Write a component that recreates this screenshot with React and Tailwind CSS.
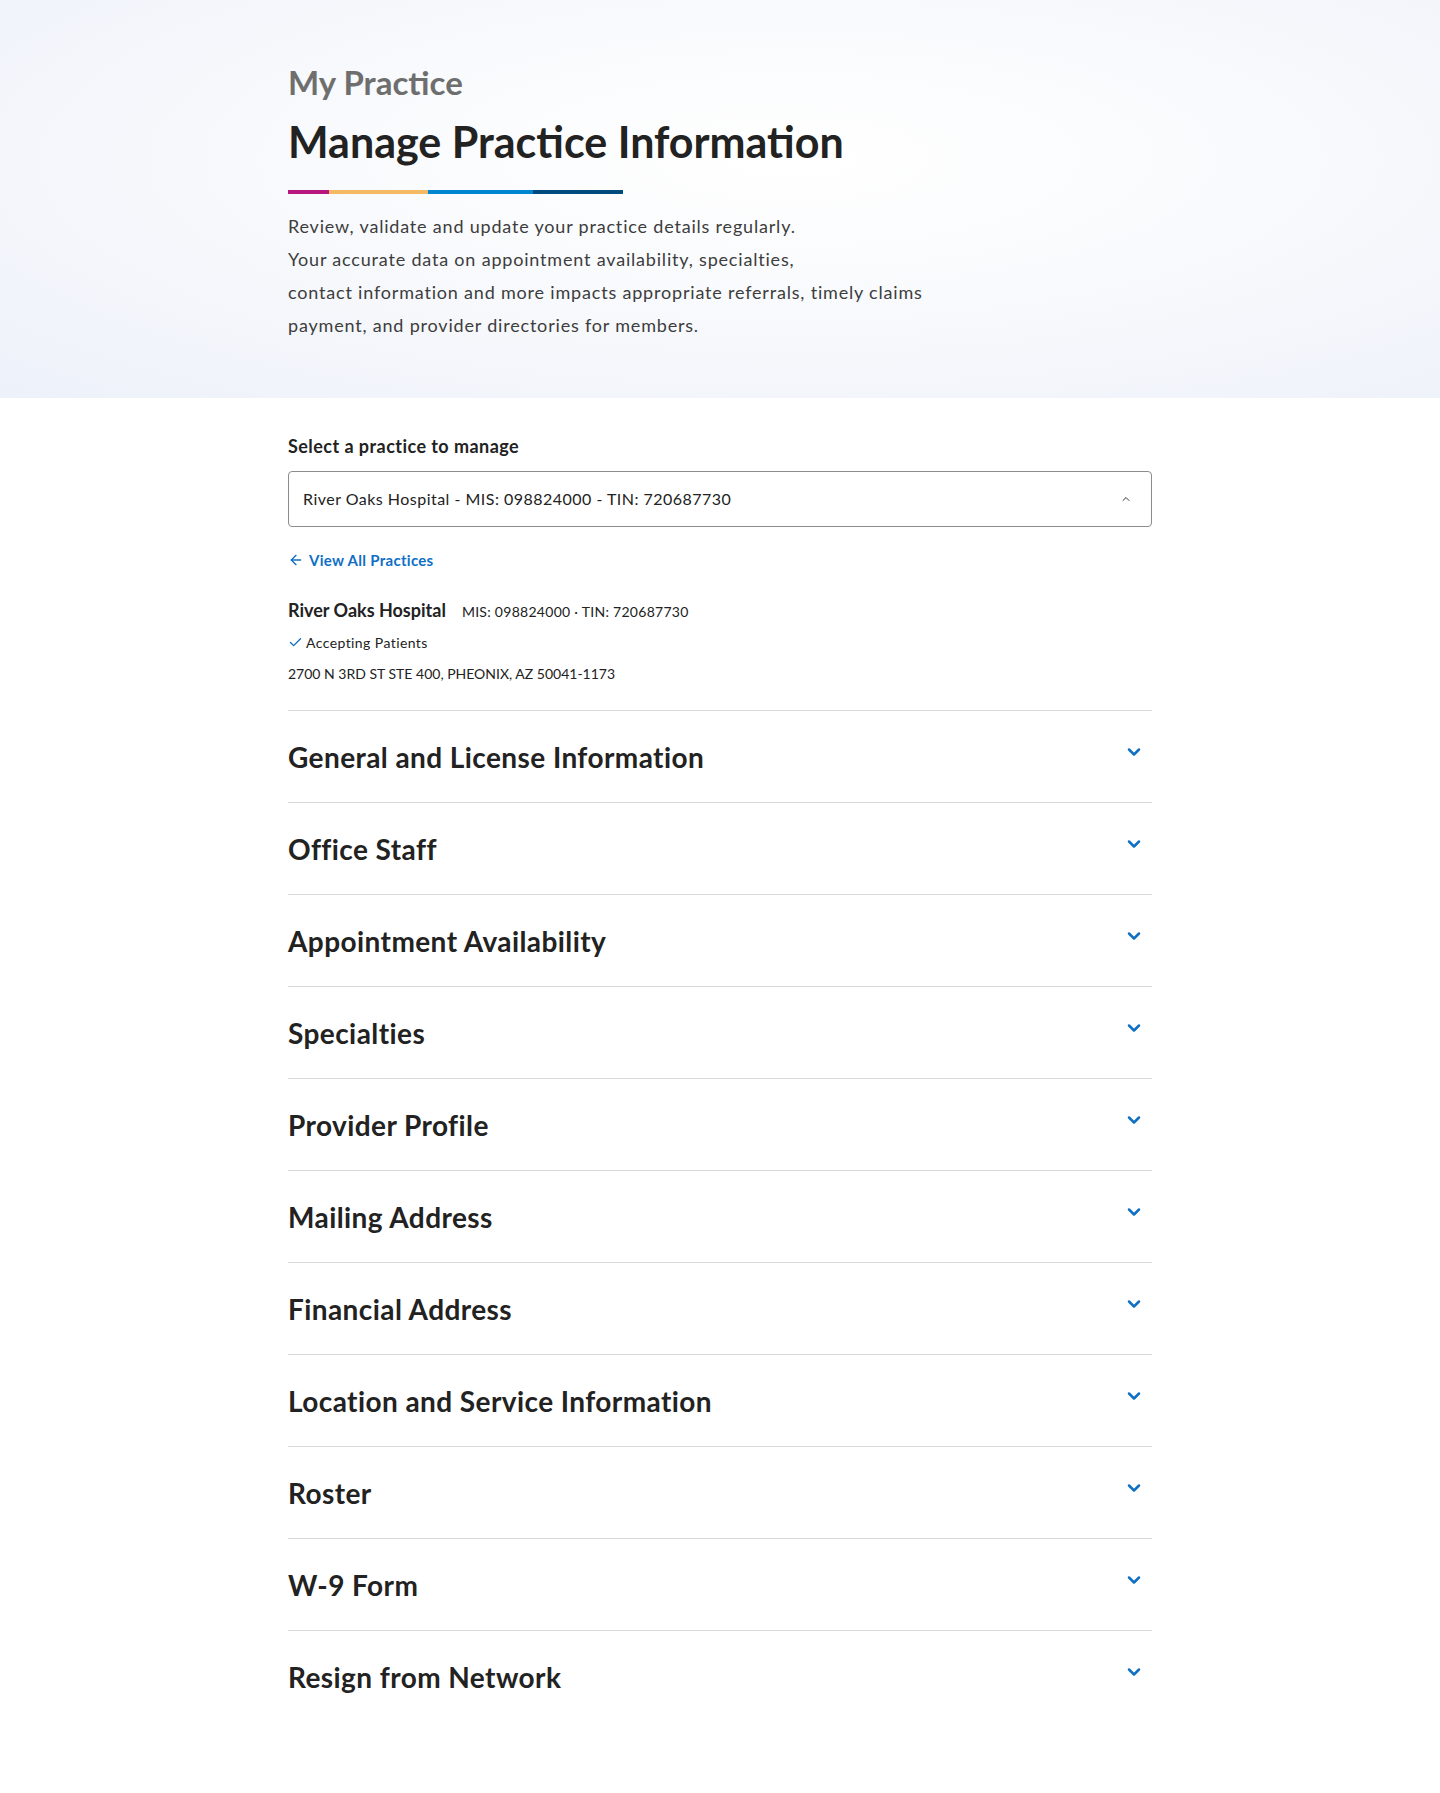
import React from 'react';
import { ChevronDown, ChevronUp, ArrowLeft, Check } from 'lucide-react';

const sections = [
  'General and License Information',
  'Office Staff',
  'Appointment Availability',
  'Specialties',
  'Provider Profile',
  'Mailing Address',
  'Financial Address',
  'Location and Service Information',
  'Roster',
  'W-9 Form',
  'Resign from Network',
];

const SectionRow = ({ title }) => {
  return (
    <button className="flex items-center justify-between w-full h-[92px] border-t border-[#d9d9d9] text-left">
      <span className="text-[28px] leading-8 font-bold tracking-[0.015em] text-[#222222]">{title}</span>
      <ChevronDown className="w-5 h-5 mr-[8px] -mt-[10px] text-[#0f6fc5]" strokeWidth={3} />
    </button>
  );
};

const App = () => {
  return (
    <div className="min-h-screen bg-white font-['Lato',sans-serif] text-[#222222]">
      {/* Hero */}
      <div className="h-[398px] bg-[radial-gradient(ellipse_at_55%_40%,#ffffff_0%,#fafbfd_35%,#edf1f9_100%)]">
        <div className="w-[864px] mx-auto pt-16">
          <div className="text-[33px] leading-9 font-bold text-[#6e6e6e]">My Practice</div>
          <h1 className="mt-[18px] text-[43px] leading-[48px] font-bold text-[#222222]">
            Manage Practice Information
          </h1>
          <div className="mt-6 flex h-1 w-[335px]">
            <div className="w-[41px] bg-[#b8177f]" />
            <div className="w-[99px] bg-[#f5b963]" />
            <div className="w-[105px] bg-[#0086cf]" />
            <div className="w-[90px] bg-[#004b7d]" />
          </div>
          <p className="mt-4 text-[18px] leading-[33px] tracking-[0.045em] text-[#3d3d3d]">
            Review, validate and update your practice details regularly.
            <br />
            Your accurate data on appointment availability, specialties,
            <br />
            contact information and more impacts appropriate referrals, timely claims
            <br />
            payment, and provider directories for members.
          </p>
        </div>
      </div>

      {/* Practice selection */}
      <div className="w-[864px] mx-auto pt-9 pb-[71px]">
        <label className="block text-[18px] leading-6 font-bold tracking-[0.025em] text-[#222222]">
          Select a practice to manage
        </label>
        <div className="mt-[13px] flex items-center justify-between h-14 px-[14px] border border-[#8c8c8c] rounded bg-white">
          <span className="text-[16px] tracking-[0.03em] text-[#222222]">
            River Oaks Hospital - MIS: 098824000 - TIN: 720687730
          </span>
          <ChevronUp className="w-3 h-3 mr-[5px] text-[#333333]" strokeWidth={2} />
        </div>

        <a href="#" className="mt-[23px] flex items-center gap-[5px] h-5 text-[15px] font-bold text-[#0f6fc5]">
          <ArrowLeft className="w-4 h-4" strokeWidth={2} />
          <span className="tracking-[0.02em]">View All Practices</span>
        </a>

        <div className="mt-[27px] flex items-baseline gap-4 h-6">
          <span className="text-[18px] font-bold text-[#222222]">River Oaks Hospital</span>
          <span className="text-[14px] tracking-[0.02em] text-[#222222]">MIS: 098824000 · TIN: 720687730</span>
        </div>
        <div className="mt-[11px] flex items-center gap-[3px] h-5 text-[14px] text-[#222222]">
          <Check className="w-[15px] h-[15px] text-[#0f6fc5]" strokeWidth={2.25} />
          <span className="tracking-[0.03em]">Accepting Patients</span>
        </div>
        <div className="mt-3 h-5 leading-5 text-[14px] text-[#222222]">
          2700 N 3RD ST STE 400, PHEONIX, AZ 50041-1173
        </div>

        <div className="mt-[26px] flex flex-col">
          {sections.map((s) => (
            <SectionRow key={s} title={s} />
          ))}
        </div>
      </div>
    </div>
  );
};

export default App;
